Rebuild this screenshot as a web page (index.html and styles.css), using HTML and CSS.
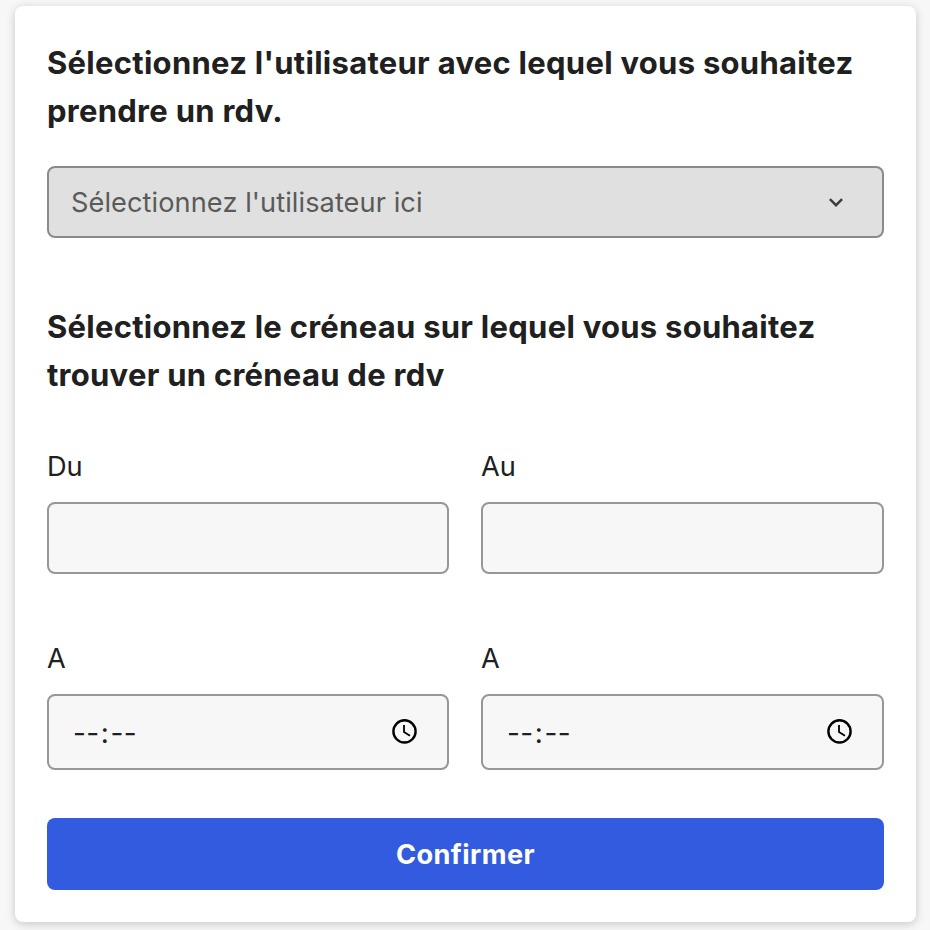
FILE: index.html
```html
<!DOCTYPE html>
<html lang="fr">
<head>
<meta charset="utf-8">
<title>Rendez-vous</title>
<link rel="stylesheet" href="styles.css">
</head>
<body>
<form class="card">
  <h2 class="title"><span class="line">Sélectionnez l'utilisateur avec lequel vous souhaitez</span><span class="line">prendre un rdv.</span></h2>
  <div class="select">
    <span class="select-text">Sélectionnez l'utilisateur ici</span>
    <svg class="chevron" width="24" height="24" viewBox="0 0 24 24"><path d="M5.9 9.2l6.1 6 6.1-6" fill="none" stroke="#3c3c3c" stroke-width="2.4"/></svg>
  </div>
  <h2 class="title second"><span class="line">Sélectionnez le créneau sur lequel vous souhaitez</span><span class="line">trouver un créneau de rdv</span></h2>
  <div class="grid">
    <div class="field"><label class="label">Du</label><div class="input"></div></div>
    <div class="field"><label class="label">Au</label><div class="input"></div></div>
    <div class="field"><label class="label">A</label><div class="input time"><span class="time-text">--<span class="colon">:</span>--</span><svg class="clock" width="26" height="26" viewBox="0 0 26 26"><circle cx="13.5" cy="12.4" r="11.1"/><path d="M13 6v7l6 3.7"/></svg></div></div>
    <div class="field"><label class="label">A</label><div class="input time"><span class="time-text">--<span class="colon">:</span>--</span><svg class="clock" width="26" height="26" viewBox="0 0 26 26"><circle cx="13.5" cy="12.4" r="11.1"/><path d="M13 6v7l6 3.7"/></svg></div></div>
  </div>
  <button class="submit" type="button">Confirmer</button>
</form>
</body>
</html>
```
FILE: styles.css
```css
* { box-sizing: border-box; }
body { margin: 0; padding: 6px 14px 8px 15px; height: 930px; overflow: hidden; background: #f7f7f7; font-family: Inter, sans-serif; color: #202020; }
.card { height: 916px; padding: 33px 32px 32px; background: #fff; border-radius: 8px; box-shadow: 0 2px 10px rgba(0,0,0,.2); }
.title { margin: 0; font-size: 31px; line-height: 48px; font-weight: 700; letter-spacing: .28px; }
.line { display: block; white-space: nowrap; }
.second { margin-top: 65px; letter-spacing: .27px; }
.select { display: flex; align-items: center; justify-content: space-between; margin-top: 31px; height: 72px; padding: 0 34px 0 22px; border: 2px solid #8a8a8a; border-radius: 8px; background: #e0e0e0; color: #5a5a5a; font-size: 27.2px; letter-spacing: .07px; }
.select-text { padding-top: 2px; line-height: 40px; }
.grid { display: grid; grid-template-columns: 402px 403px; column-gap: 32px; row-gap: 64px; margin-top: 47px; }
.label { display: block; height: 56px; line-height: 41px; font-size: 27.2px; }
.input { height: 72px; border: 2px solid #979797; border-radius: 8px; background: #f7f7f7; }
.time { display: flex; align-items: center; justify-content: space-between; height: 76px; padding: 0 30px 0 24px; font-size: 28px; }
.time-text { padding-top: 1px; letter-spacing: .3px; }
.colon { margin: 0 1.4px; }
.clock { fill: none; stroke: #000; stroke-width: 2.4; }
.clock path { stroke-width: 1.8; }
.submit { display: block; width: 100%; height: 72px; margin-top: 48px; padding: 2px 0 0; border: 0; border-radius: 8px; background: #335be0; color: #fff; font: 700 27.2px/70px Inter, sans-serif; letter-spacing: .4px; }
```
